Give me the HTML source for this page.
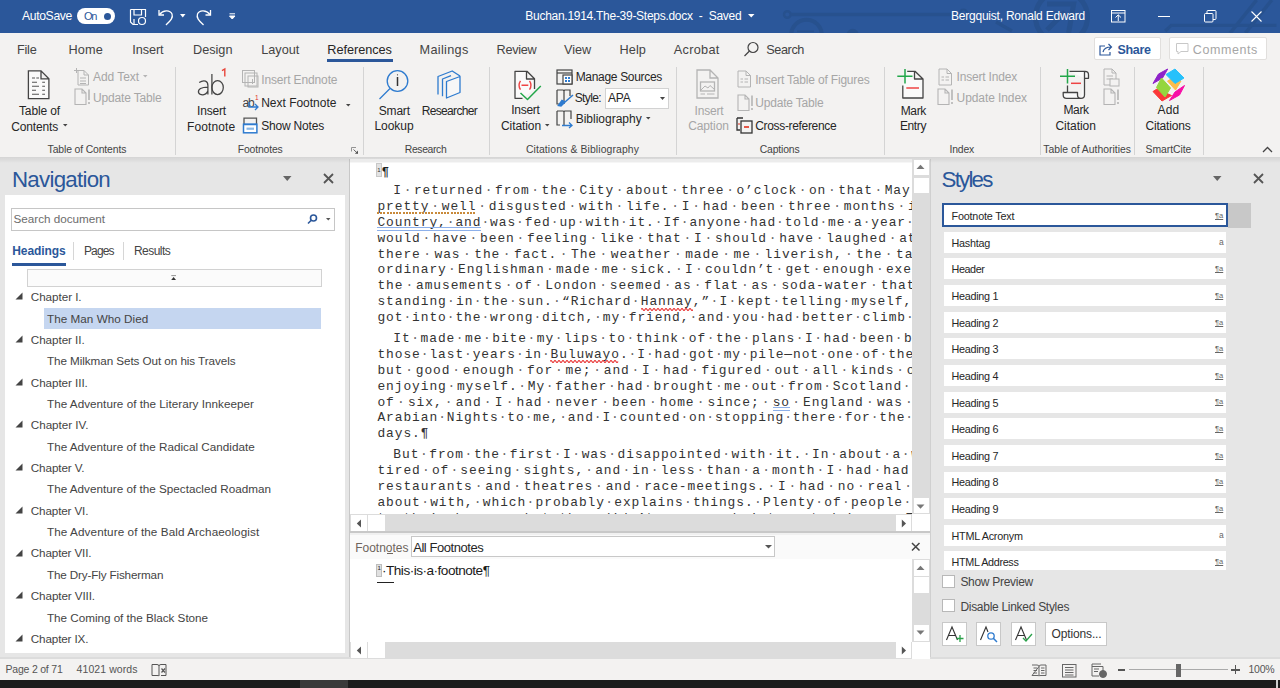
<!DOCTYPE html>
<html><head><meta charset="utf-8">
<style>
*{margin:0;padding:0;box-sizing:border-box}
html,body{width:1280px;height:688px;overflow:hidden;background:#f3f2f1;font-family:"Liberation Sans",sans-serif;color:#262626;position:relative}
.a{position:absolute}
.t{position:absolute;line-height:0;white-space:pre}
svg.a{overflow:visible}
.dl{position:absolute;line-height:0;white-space:pre;font-family:"Liberation Mono",monospace;font-size:12.9px;letter-spacing:0.93px;color:#333}
.sp{display:inline-block;text-align:center;color:#666}
</style></head><body>
<div class="a" style="left:0px;top:0px;width:1280px;height:33px;background:#2b579a;"></div>
<div class="a" style="left:760px;top:0;width:520px;height:33px;overflow:hidden">
<svg class="a" style="left:0px;top:0px;" width="520" height="33" viewBox="0 0 520 33"><g fill="none" stroke="#27518e" stroke-width="3.3"><circle cx="27.3" cy="14.5" r="3.3" stroke-width="2.4"/><line x1="30.5" y1="14.5" x2="193" y2="14.5"/><circle cx="46.5" cy="35" r="15.3" stroke-width="4"/><path d="M37 31.3 H54" stroke-width="1.6"/><circle cx="92.7" cy="35" r="4.5" fill="#27518e"/><circle cx="203.5" cy="13" r="3.5" stroke-width="2.2"/><path d="M236 22 L252 31"/><circle cx="301.5" cy="17" r="26" stroke-width="5"/><path d="M287 4 H313.7 L308.6 33 M287 30 L305 12" stroke-width="5"/><path d="M405.2 31 L411.3 25.4 H516.4"/><path d="M496.6 0 L470.2 33" stroke-width="3.5"/><path d="M511.8 0 L485.4 33" stroke-width="3.5"/></g></svg>
</div>
<div class="t" style="left:22.00px;top:16.37px;font-size:12.2px;color:#fff;letter-spacing:-0.363px">AutoSave</div>
<div class="a" style="left:77px;top:8px;width:38px;height:16px;border-radius:8px;background:#fff"></div>
<div class="t" style="left:84.00px;top:16.39px;font-size:11px;color:#2b579a;letter-spacing:-1.337px">On</div>
<div class="a" style="left:104px;top:12.5px;width:7px;height:7px;border-radius:50%;background:#2b579a"></div>
<svg class="a" style="left:129px;top:8px;" width="18" height="18" viewBox="0 0 18 18"><g fill="none" stroke="#fff" stroke-width="1.2"><path d="M1.5 1.5 H16.5 V9 M1.5 1.5 V14 L4 16.5 H9"/><path d="M5 1.5 V7 H12.5 V1.5"/><path d="M5 16.5 V11"/><circle cx="13" cy="13" r="3.5"/></g></svg>
<svg class="a" style="left:157px;top:8px;" width="20" height="18" viewBox="0 0 20 18"><g fill="none" stroke="#fff" stroke-width="1.3"><path d="M2 2 V7 H7"/><path d="M2.5 6.5 C6 2 13 1.5 15 6 C16.5 10 13 13 9 17"/></g></svg>
<svg class="a" style="left:180px;top:14px;" width="6" height="4" viewBox="0 0 6 4"><path d="M0 0 H5.5 L2.75 3.5Z" fill="#fff"/></svg>
<svg class="a" style="left:195px;top:8px;" width="18" height="18" viewBox="0 0 18 18"><g fill="none" stroke="#fff" stroke-width="1.3"><path d="M15.5 2 V7 H10.5"/><path d="M15 6.5 C11.5 2 4.5 1.5 2.5 6 C1 10 4.5 13 8.5 17"/></g></svg>
<svg class="a" style="left:229px;top:13px;" width="7" height="7" viewBox="0 0 7 7"><path d="M0.5 0.8 H6 M0.5 3 H6 L3.25 6Z" stroke="#fff" stroke-width="1" fill="#fff"/></svg>
<div class="t" style="left:525.30px;top:15.84px;font-size:12px;color:#fff;letter-spacing:-0.277px">Buchan.1914.The-39-Steps.docx  -  Saved</div>
<svg class="a" style="left:748px;top:14px;" width="7" height="4" viewBox="0 0 7 4"><path d="M0 0 H6.5 L3.25 3.5Z" fill="#fff"/></svg>
<div class="t" style="left:951.00px;top:15.84px;font-size:12px;color:#fff;letter-spacing:-0.226px">Bergquist, Ronald Edward</div>
<svg class="a" style="left:1111px;top:10px;" width="15" height="13" viewBox="0 0 15 13"><g fill="none" stroke="#fff" stroke-width="1"><rect x="0.5" y="0.5" width="13.5" height="11.5"/><path d="M0.5 3 H14 M7.25 11 V5 M4.5 7.5 L7.25 4.8 L10 7.5"/></g></svg>
<div class="a" style="left:1158px;top:16px;width:12px;height:1px;background:#fff;"></div>
<svg class="a" style="left:1204px;top:10px;" width="13" height="13" viewBox="0 0 13 13"><g fill="none" stroke="#fff" stroke-width="1"><rect x="0.5" y="3.5" width="8.5" height="8.5" rx="1"/><path d="M3 3.5 V1.5 Q3 0.5 4 0.5 H11 Q12 0.5 12 1.5 V8.5 Q12 9.5 11 9.5 H9"/></g></svg>
<svg class="a" style="left:1251px;top:11px;" width="11" height="11" viewBox="0 0 11 11"><path d="M0.5 0.5 L10.5 10.5 M10.5 0.5 L0.5 10.5" stroke="#fff" stroke-width="1.1"/></svg>
<div class="t" style="left:17.00px;top:49.60px;font-size:12.7px;color:#444444;letter-spacing:-0.241px">File</div>
<div class="t" style="left:68.40px;top:49.60px;font-size:12.7px;color:#444444;letter-spacing:0.181px">Home</div>
<div class="t" style="left:132.30px;top:49.60px;font-size:12.7px;color:#444444;letter-spacing:-0.094px">Insert</div>
<div class="t" style="left:193.00px;top:49.60px;font-size:12.7px;color:#444444;letter-spacing:-0.005px">Design</div>
<div class="t" style="left:261.20px;top:49.60px;font-size:12.7px;color:#444444;letter-spacing:-0.005px">Layout</div>
<div class="t" style="left:327.30px;top:49.60px;font-size:12.7px;color:#262626;letter-spacing:-0.025px">References</div>
<div class="t" style="left:419.50px;top:49.60px;font-size:12.7px;color:#444444;letter-spacing:0.327px">Mailings</div>
<div class="t" style="left:496.60px;top:49.60px;font-size:12.7px;color:#444444;letter-spacing:-0.324px">Review</div>
<div class="t" style="left:564.00px;top:49.60px;font-size:12.7px;color:#444444;letter-spacing:0.001px">View</div>
<div class="t" style="left:619.60px;top:49.60px;font-size:12.7px;color:#444444;letter-spacing:0.070px">Help</div>
<div class="t" style="left:673.75px;top:49.60px;font-size:12.7px;color:#444444;letter-spacing:0.319px">Acrobat</div>
<div class="t" style="left:766.30px;top:49.60px;font-size:12.7px;color:#444444;letter-spacing:-0.423px">Search</div>
<div class="a" style="left:327px;top:59px;width:66px;height:3px;background:#2b579a;"></div>
<svg class="a" style="left:743px;top:41px;" width="17" height="17" viewBox="0 0 17 17"><g fill="none" stroke="#444" stroke-width="1.2"><circle cx="10" cy="6.5" r="5"/><path d="M6.5 10 L1.5 15"/></g></svg>
<div class="a" style="left:1094px;top:37px;width:67px;height:23px;background:#fff;border:1px solid #e1dfdd;border-radius:2px"></div>
<svg class="a" style="left:1099px;top:42px;" width="15" height="14" viewBox="0 0 15 14"><g fill="none" stroke="#2b579a" stroke-width="1.2"><path d="M6 4 H1 V13 H11 V10"/><path d="M4 10 C5 6 8 5 12 5 M9.5 2 L12.5 5 L9.5 8"/></g></svg>
<div class="t" style="left:1117.40px;top:49.57px;font-size:12.5px;color:#2b579a;letter-spacing:-0.308px;font-weight:bold">Share</div>
<div class="a" style="left:1169px;top:37px;width:98px;height:23px;background:#fff;border:1px solid #e1dfdd;border-radius:2px"></div>
<svg class="a" style="left:1176px;top:43px;" width="13" height="12" viewBox="0 0 13 12"><path d="M0.5 0.5 H12 V8.5 H5 L2 11 V8.5 H0.5Z" fill="none" stroke="#c8c8c8" stroke-width="1"/></svg>
<div class="t" style="left:1192.80px;top:49.57px;font-size:12.5px;color:#a6a6a6;letter-spacing:0.571px">Comments</div>
<div class="a" style="left:0px;top:66px;width:1280px;height:91px;background:#f3f2f1;"></div>
<div class="a" style="left:0px;top:157px;width:1280px;height:1px;background:#d6d6d6;"></div>
<div class="a" style="left:0px;top:158px;width:1280px;height:1px;background:#e8e8e8;"></div>
<div class="a" style="left:175px;top:67px;width:1px;height:88px;background:#d4d4d4;"></div>
<div class="a" style="left:363px;top:67px;width:1px;height:88px;background:#d4d4d4;"></div>
<div class="a" style="left:489px;top:67px;width:1px;height:88px;background:#d4d4d4;"></div>
<div class="a" style="left:676px;top:67px;width:1px;height:88px;background:#d4d4d4;"></div>
<div class="a" style="left:883.5px;top:67px;width:1px;height:88px;background:#d4d4d4;"></div>
<div class="a" style="left:1040px;top:67px;width:1px;height:88px;background:#d4d4d4;"></div>
<div class="a" style="left:1134px;top:67px;width:1px;height:88px;background:#d4d4d4;"></div>
<div class="a" style="left:1203px;top:67px;width:1px;height:88px;background:#d4d4d4;"></div>
<div class="t" style="left:47.60px;top:149.70px;font-size:10.4px;color:#444444;letter-spacing:-0.132px">Table of Contents</div>
<div class="t" style="left:237.80px;top:149.70px;font-size:10.4px;color:#444444;letter-spacing:-0.150px">Footnotes</div>
<div class="t" style="left:404.80px;top:149.70px;font-size:10.4px;color:#444444;letter-spacing:-0.364px">Research</div>
<div class="t" style="left:525.90px;top:149.70px;font-size:10.4px;color:#444444;letter-spacing:0.120px">Citations &amp; Bibliography</div>
<div class="t" style="left:759.70px;top:149.70px;font-size:10.4px;color:#444444;letter-spacing:-0.156px">Captions</div>
<div class="t" style="left:949.50px;top:149.70px;font-size:10.4px;color:#444444;letter-spacing:-0.188px">Index</div>
<div class="t" style="left:1043.20px;top:149.70px;font-size:10.4px;color:#444444;letter-spacing:-0.004px">Table of Authorities</div>
<div class="t" style="left:1145.50px;top:149.70px;font-size:10.4px;color:#444444;letter-spacing:-0.037px">SmartCite</div>
<svg class="a" style="left:351px;top:147px;" width="8" height="7" viewBox="0 0 8 7"><path d="M0.5 0.5 H5 M0.5 0.5 V4.5" fill="none" stroke="#888" stroke-width="0.9"/><path d="M2.5 2.5 L6.5 6.3" stroke="#555" stroke-width="0.9"/><path d="M7 3.5 V6.8 H3.8Z" fill="#555"/></svg>
<svg class="a" style="left:1262px;top:146px;" width="11" height="7" viewBox="0 0 11 7"><path d="M1 6 L5.5 1.5 L10 6" fill="none" stroke="#444" stroke-width="1.3"/></svg>
<svg class="a" style="left:27px;top:70px;" width="24" height="30" viewBox="0 0 24 30"><g fill="none" stroke="#444" stroke-width="1.3"><path d="M1.4 0.9 H14 L21.9 8.8 V28.6 H1.4Z M14 0.9 V8.8 H21.9" fill="#fafafa"/><path d="M5 8 H8 M9.3 8 H12 M5 12.2 H10 M15.2 12.2 H18 M5 16.2 H12 M15.2 16.2 H18 M5 20.2 H9 M15.2 20.2 H18 M5 24.3 H12 M15.2 24.3 H18" stroke="#555" stroke-width="1.1"/></g></svg>
<div class="t" style="left:19.00px;top:110.54px;font-size:12px;color:#262626;letter-spacing:-0.129px">Table of</div>
<div class="t" style="left:11.30px;top:126.54px;font-size:12px;color:#262626;letter-spacing:-0.166px">Contents</div>
<svg class="a" style="left:63px;top:124px;" width="5" height="3" viewBox="0 0 5 3"><path d="M0 0 H4.5 L2.25 2.5Z" fill="#444"/></svg>
<svg class="a" style="left:74px;top:68px;" width="17" height="18" viewBox="0 0 17 18"><g fill="none" stroke="#b4b4b4" stroke-width="1"><path d="M4 2.5 H10 L14.5 7 V17 H4Z M10 2.5 V7 H14.5 M6 10 H12 M6 13 H12 M6 15.5 H12"/><path d="M2.5 0 V5 M0 2.5 H5"/></g></svg>
<div class="t" style="left:93.00px;top:76.84px;font-size:12px;color:#a6a6a6;letter-spacing:-0.060px">Add Text</div>
<svg class="a" style="left:143px;top:75px;" width="5" height="3" viewBox="0 0 5 3"><path d="M0 0 H4.5 L2.25 2.5Z" fill="#b4b4b4"/></svg>
<svg class="a" style="left:74px;top:88px;" width="17" height="18" viewBox="0 0 17 18"><g fill="none" stroke="#b4b4b4" stroke-width="1.1"><path d="M1 1 H8 L12 5 V16.5 H1Z M8 1 V5 H12"/><path d="M15 1.5 V12 M15 14 V16" stroke-width="1.6"/></g></svg>
<div class="t" style="left:93.00px;top:97.64px;font-size:12px;color:#a6a6a6;letter-spacing:-0.158px">Update Table</div>
<svg class="a" style="left:195px;top:66px;" width="34" height="32" viewBox="0 0 34 32"><g fill="none" stroke="#444" stroke-width="1.25"><path d="M16.9 7.9 V28.6"/><ellipse cx="22.6" cy="21.6" rx="5.7" ry="6.9"/><path d="M4.2 16.6 Q7.5 14.4 10.5 15.2 Q12.9 16.2 12.9 19.5 V28.6 M12.9 21.2 Q8 21.3 5.5 22.5 Q3 24 3.5 26.5 Q4.5 29 8 28.9 Q11.5 28.5 12.9 24.8"/></g><path d="M27 4.6 L29.8 2.9 V10.6" fill="none" stroke="#e8453a" stroke-width="1.4"/></svg>
<div class="t" style="left:197.00px;top:110.54px;font-size:12px;color:#262626;letter-spacing:-0.169px">Insert</div>
<div class="t" style="left:187.00px;top:126.54px;font-size:12px;color:#262626;letter-spacing:0.117px">Footnote</div>
<svg class="a" style="left:242px;top:70px;" width="18" height="18" viewBox="0 0 18 18"><g fill="none" stroke="#b4b4b4" stroke-width="1"><rect x="0.5" y="0.5" width="12" height="12"/><rect x="3" y="3" width="12" height="13"/><rect x="6" y="6" width="10" height="11"/><path d="M10.5 9 V14"/></g></svg>
<div class="t" style="left:261.20px;top:79.54px;font-size:12px;color:#a6a6a6;letter-spacing:-0.132px">Insert Endnote</div>
<div class="t" style="left:242.50px;top:103.34px;font-size:12px;color:#444;letter-spacing:-1.174px">ab</div>
<div class="t" style="left:255.00px;top:97.75px;font-size:6.5px;color:#e0301e">1</div>
<svg class="a" style="left:248px;top:101px;" width="12" height="10" viewBox="0 0 12 10"><g fill="none" stroke="#2e7bcf" stroke-width="1.3"><path d="M1 1 V6 H10 M7 3 L10 6 L7 9"/></g></svg>
<div class="t" style="left:261.20px;top:102.94px;font-size:12px;color:#262626;letter-spacing:-0.013px">Next Footnote</div>
<svg class="a" style="left:346px;top:104px;" width="5" height="3" viewBox="0 0 5 3"><path d="M0 0 H4.5 L2.25 2.5Z" fill="#444"/></svg>
<svg class="a" style="left:242px;top:117px;" width="16" height="17" viewBox="0 0 16 17"><g fill="none" stroke-width="1.3"><path d="M2 7 V1.2 H14.5 V7" stroke="#555"/><rect x="1.5" y="7.2" width="13.4" height="8.6" fill="#fff" stroke="#2e7bcf" stroke-width="1.5"/><path d="M4.5 11.7 H12" stroke="#8ab8e6" stroke-width="2.2"/><path d="M1.5 7.5 H15" stroke="#2e7bcf" stroke-width="1.5"/></g></svg>
<div class="t" style="left:261.20px;top:125.84px;font-size:12px;color:#262626;letter-spacing:-0.190px">Show Notes</div>
<svg class="a" style="left:377px;top:69px;" width="36" height="32" viewBox="0 0 36 32"><g fill="none" stroke="#2e7bcf" stroke-width="1.3"><circle cx="20.5" cy="12" r="10.3"/><path d="M13 19.5 L2.5 30"/><path d="M20.5 8 V17" stroke="#333" stroke-width="1.5"/><circle cx="20.5" cy="5.8" r="0.6" fill="#333" stroke="none"/></g></svg>
<div class="t" style="left:378.80px;top:110.84px;font-size:12px;color:#262626;letter-spacing:-0.201px">Smart</div>
<div class="t" style="left:374.50px;top:126.44px;font-size:12px;color:#262626;letter-spacing:-0.062px">Lookup</div>
<svg class="a" style="left:436px;top:69px;" width="26" height="31" viewBox="0 0 26 31"><g fill="none" stroke="#2e7bcf" stroke-width="1.3" stroke-linejoin="round"><path d="M2 25.4 V7.5 L16.2 2 L24 7"/><path d="M6.5 27.3 V10 L15 6.6"/><path d="M10.5 12.5 V29 L24 23.5 V7.5Z" fill="#f7f7f7"/></g></svg>
<div class="t" style="left:421.80px;top:110.84px;font-size:12px;color:#262626;letter-spacing:-0.683px">Researcher</div>
<svg class="a" style="left:505px;top:64px;" width="40" height="40" viewBox="0 0 40 40"><g fill="none" stroke-width="1.3" stroke-linejoin="round"><path d="M17.5 34.3 H10 V7.3 H22 L29.5 14.8 V25 M21.5 7.3 V15 H29.5" stroke="#444" fill="#fafafa"/><path d="M15.5 16.8 Q12.5 21.2 15.5 25.6 M24.5 16.8 Q27.5 21.2 24.5 25.6 M16.5 21.3 H23.3" stroke="#ee4444" stroke-width="1.4"/><path d="M15.5 29 L22.5 35.5 L35.8 22" stroke="#22a74a" stroke-width="1.5"/></g></svg>
<div class="t" style="left:511.25px;top:110.24px;font-size:12px;color:#262626;letter-spacing:-0.269px">Insert</div>
<div class="t" style="left:501.00px;top:126.44px;font-size:12px;color:#262626;letter-spacing:-0.086px">Citation</div>
<svg class="a" style="left:545px;top:124px;" width="5" height="3" viewBox="0 0 5 3"><path d="M0 0 H4.5 L2.25 2.5Z" fill="#444"/></svg>
<svg class="a" style="left:556px;top:69px;" width="18" height="17" viewBox="0 0 18 17"><g fill="none" stroke="#444" stroke-width="1.2"><rect x="1" y="1" width="15" height="14"/><path d="M1 4 H16"/><rect x="7" y="6" width="9" height="9" fill="#fff"/></g><g fill="#2e7bcf"><rect x="9" y="8" width="2" height="2"/><rect x="12" y="8" width="2" height="2"/><rect x="9" y="11" width="2" height="2"/><rect x="12" y="11" width="2" height="2"/></g></svg>
<div class="t" style="left:575.70px;top:77.04px;font-size:12px;color:#262626;letter-spacing:-0.316px">Manage Sources</div>
<svg class="a" style="left:556px;top:89px;" width="18" height="18" viewBox="0 0 18 18"><g fill="none" stroke="#444" stroke-width="1.2"><path d="M1 1 H7 Q8 1 8 2 V15 M1 1 V15 H4"/><path d="M8 2 Q8 1 9 1 H14 V7"/></g><path d="M17 6 L9 13 M9 13 L5 17 L2.5 16.5 L6 11.5Z" stroke="#2e7bcf" stroke-width="1.6" fill="#2e7bcf"/></svg>
<div class="t" style="left:574.70px;top:98.44px;font-size:12px;color:#262626;letter-spacing:-0.619px">Style:</div>
<div class="a" style="left:604.6px;top:87.6px;width:64px;height:21px;background:#fff;border:1px solid #d2d2d2"></div>
<div class="t" style="left:608.00px;top:98.44px;font-size:12px;color:#262626;letter-spacing:-0.240px">APA</div>
<svg class="a" style="left:659.5px;top:97px;" width="6" height="4" viewBox="0 0 6 4"><path d="M0 0 H5 L2.5 3Z" fill="#444"/></svg>
<svg class="a" style="left:556px;top:110px;" width="18" height="18" viewBox="0 0 18 18"><g fill="none" stroke="#444" stroke-width="1.2"><path d="M1 1 H7 Q8 1 8 2 V15 M1 1 V15 H4 M8 2 Q8 1 9 1 H15 V9"/></g><path d="M6 15.5 H16 M13 12.5 L16 15.5 L13 18" fill="none" stroke="#2e7bcf" stroke-width="1.3"/></svg>
<div class="t" style="left:575.70px;top:119.24px;font-size:12px;color:#262626;letter-spacing:-0.003px">Bibliography</div>
<svg class="a" style="left:646.4px;top:117px;" width="5" height="3" viewBox="0 0 5 3"><path d="M0 0 H4.5 L2.25 2.5Z" fill="#444"/></svg>
<svg class="a" style="left:695px;top:69px;" width="25" height="31" viewBox="0 0 25 31"><g fill="none" stroke="#b4b4b4" stroke-width="1.3"><path d="M2 1 H15 L23 9 V29 H2Z M15 1 V9 H23"/><rect x="5.5" y="13" width="14" height="9"/><path d="M6 21 L10 17 L13 19 L15 16.5 L19 20" stroke-width="1"/><path d="M5.5 25 H10 M12 25 H19.5" stroke-width="1"/></g></svg>
<div class="t" style="left:694.50px;top:110.54px;font-size:12px;color:#a6a6a6;letter-spacing:-0.169px">Insert</div>
<div class="t" style="left:688.20px;top:126.44px;font-size:12px;color:#a6a6a6;letter-spacing:-0.109px">Caption</div>
<svg class="a" style="left:737px;top:70px;" width="15" height="18" viewBox="0 0 15 18"><g fill="none" stroke="#b4b4b4" stroke-width="1"><path d="M1 1 H9 L13.5 5.5 V17 H1Z M9 1 V5.5 H13.5 M3.5 9 H6 M7.5 9 H11 M3.5 12 H6 M7.5 12 H11"/></g></svg>
<div class="t" style="left:755.20px;top:79.54px;font-size:12px;color:#a6a6a6;letter-spacing:-0.183px">Insert Table of Figures</div>
<svg class="a" style="left:737px;top:94px;" width="17" height="18" viewBox="0 0 17 18"><g fill="none" stroke="#b4b4b4" stroke-width="1.1"><path d="M1 1 H8 L12 5 V16.5 H1Z M8 1 V5 H12"/><path d="M15 1.5 V12 M15 14 V16" stroke-width="1.6"/></g></svg>
<div class="t" style="left:755.20px;top:102.84px;font-size:12px;color:#a6a6a6;letter-spacing:-0.183px">Update Table</div>
<svg class="a" style="left:735px;top:117px;" width="19" height="17" viewBox="0 0 19 17"><g fill="none" stroke="#333" stroke-width="1.3"><path d="M2 1 H8 M2 1 V13 H5"/><rect x="6" y="4" width="11" height="12" fill="#f3f2f1"/></g><path d="M9 10 H14" stroke="#e0301e" stroke-width="1.6"/><path d="M3 7 H5" stroke="#e0301e" stroke-width="1"/></svg>
<div class="t" style="left:755.20px;top:125.84px;font-size:12px;color:#262626;letter-spacing:-0.329px">Cross-reference</div>
<svg class="a" style="left:890px;top:64px;" width="40" height="40" viewBox="0 0 40 40"><g fill="none" stroke-width="1.3" stroke-linejoin="round"><path d="M17.2 7.3 H25 L33 15 V34 H12.8 V21.5 M24.5 7.3 V15 H33" stroke="#444" fill="#fafafa"/><path d="M15 5 V19.5 M7.3 12.3 H22.5" stroke="#22a74a" stroke-width="1.5"/><path d="M16.3 24 H29" stroke="#ee4444" stroke-width="1.5"/></g></svg>
<div class="t" style="left:900.70px;top:110.54px;font-size:12px;color:#262626;letter-spacing:-0.342px">Mark</div>
<div class="t" style="left:900.00px;top:126.44px;font-size:12px;color:#262626;letter-spacing:-0.402px">Entry</div>
<svg class="a" style="left:938px;top:68px;" width="15" height="18" viewBox="0 0 15 18"><g fill="none" stroke="#b4b4b4" stroke-width="1"><path d="M1 1 H9 L13.5 5.5 V17 H1Z M9 1 V5.5 H13.5 M3.5 9 H6 M7.5 9 H11 M3.5 12 H6 M7.5 12 H11"/></g></svg>
<div class="t" style="left:956.60px;top:77.04px;font-size:12px;color:#a6a6a6;letter-spacing:-0.192px">Insert Index</div>
<svg class="a" style="left:937px;top:88px;" width="17" height="18" viewBox="0 0 17 18"><g fill="none" stroke="#b4b4b4" stroke-width="1.1"><path d="M1 1 H8 L12 5 V16.5 H1Z M8 1 V5 H12"/><path d="M15 1.5 V12 M15 14 V16" stroke-width="1.6"/></g></svg>
<div class="t" style="left:956.60px;top:97.54px;font-size:12px;color:#a6a6a6;letter-spacing:-0.090px">Update Index</div>
<svg class="a" style="left:1050px;top:64px;" width="45" height="40" viewBox="0 0 45 40"><g fill="none" stroke-width="1.3" stroke-linejoin="round"><path d="M19.5 7.3 H35 Q38.5 7.3 38.5 10.8 V14.3 H34.5 M34.5 7.3 V31 Q34.5 34.3 31 34.3 H16.5 Q13.2 34.3 13.2 31 V28.5 H27.5 V31 Q27.5 34.3 31 34.3 M17.5 21.5 V28.5" stroke="#444" fill="#fafafa"/><path d="M17.5 5 V19.5 M10 12.3 H25" stroke="#22a74a" stroke-width="1.5"/><path d="M21 19.3 H31" stroke="#ee4444" stroke-width="1.5"/></g></svg>
<div class="t" style="left:1063.40px;top:110.24px;font-size:12px;color:#262626;letter-spacing:-0.342px">Mark</div>
<div class="t" style="left:1055.50px;top:126.24px;font-size:12px;color:#262626;letter-spacing:-0.048px">Citation</div>
<svg class="a" style="left:1103px;top:68px;" width="18" height="20" viewBox="0 0 18 20"><g fill="none" stroke="#b4b4b4" stroke-width="1"><path d="M1 1 H9 L13 5 V17 H1Z M9 1 V5 H13 M3.5 8 H10 M3.5 11 H10"/><rect x="7" y="11" width="9" height="7" fill="#f3f2f1"/></g></svg>
<svg class="a" style="left:1103px;top:88px;" width="18" height="18" viewBox="0 0 18 18"><g fill="none" stroke="#b4b4b4" stroke-width="1.1"><path d="M1 1 H8 L12 5 V16.5 H1Z M8 1 V5 H12"/><path d="M15 1.5 V12 M15 14 V16" stroke-width="1.6"/></g></svg>
<svg class="a" style="left:1140px;top:64px;" width="50" height="40" viewBox="0 0 50 40"><g stroke-linejoin="round" stroke-width="1"><path d="M13 19.5 L18.5 10 L27.7 5 L22.5 14Z" fill="#8e22c9" stroke="#8e22c9"/><path d="M27.5 17 L33 14 L41 17 L35.5 26Z" fill="#fdbd4c" stroke="#fdbd4c"/><path d="M26 10.5 L35 5 L44 14 L35 19.5Z" fill="#27c1fb" stroke="#27c1fb"/><path d="M13 27.5 L17 25 L31.5 31.5 L22 37Z" fill="#fb3838" stroke="#fb3838"/><path d="M16.5 23.5 L21.5 14 L30.5 24 L25 33Z" fill="#95d63e" stroke="#95d63e"/><path d="M29.5 36.5 L35 28 L44.5 21.5 L39.5 31Z" fill="#f70fa6" stroke="#f70fa6"/></g></svg>
<div class="t" style="left:1157.60px;top:110.24px;font-size:12px;color:#262626;letter-spacing:0.116px">Add</div>
<div class="t" style="left:1145.50px;top:126.24px;font-size:12px;color:#262626;letter-spacing:-0.188px">Citations</div>
<div class="a" style="left:0px;top:159px;width:345px;height:500px;background:#e6e6e6;"></div>
<div class="a" style="left:345px;top:159px;width:4px;height:500px;background:#e6e6e6;"></div>
<div class="a" style="left:349px;top:159px;width:1px;height:500px;background:#c8c8c8;"></div>
<div class="t" style="left:12.00px;top:179.77px;font-size:22.3px;color:#2b579a;letter-spacing:-0.737px">Navigation</div>
<svg class="a" style="left:283px;top:176px;" width="9" height="6" viewBox="0 0 9 6"><path d="M0 0 H8.5 L4.25 5Z" fill="#666"/></svg>
<svg class="a" style="left:323px;top:173px;" width="11" height="11" viewBox="0 0 11 11"><path d="M1 1 L10 10 M10 1 L1 10" stroke="#555" stroke-width="1.8"/></svg>
<div class="a" style="left:5px;top:195px;width:340px;height:458px;background:#fff;"></div>
<div class="a" style="left:11px;top:207.5px;width:324px;height:23px;background:#fff;border:1px solid #c6c6c6"></div>
<div class="t" style="left:13.50px;top:219.45px;font-size:11.7px;color:#6d6d6d;letter-spacing:-0.014px">Search document</div>
<svg class="a" style="left:307px;top:214px;" width="11" height="10" viewBox="0 0 11 10"><g fill="none" stroke="#2b579a" stroke-width="1.6"><circle cx="6.5" cy="4" r="3"/><path d="M4.3 6.2 L1 9.5"/></g></svg>
<svg class="a" style="left:326px;top:218px;" width="5" height="3" viewBox="0 0 5 3"><path d="M0 0 H4.5 L2.25 2.5Z" fill="#555"/></svg>
<div class="t" style="left:12.30px;top:250.94px;font-size:12px;color:#2b579a;letter-spacing:-0.101px;font-weight:bold">Headings</div>
<div class="a" style="left:12px;top:263px;width:54px;height:3px;background:#2b579a;"></div>
<div class="a" style="left:73px;top:242px;width:1px;height:18px;background:#d6d6d6;"></div>
<div class="a" style="left:123px;top:242px;width:1px;height:18px;background:#d6d6d6;"></div>
<div class="t" style="left:84.00px;top:250.94px;font-size:12px;color:#444;letter-spacing:-0.885px">Pages</div>
<div class="t" style="left:134.00px;top:250.94px;font-size:12px;color:#444;letter-spacing:-0.545px">Results</div>
<div class="a" style="left:27px;top:269px;width:295px;height:18px;background:#fbfbfb;border:1px solid #d2d2d2"></div>
<svg class="a" style="left:171px;top:274.8px;" width="6" height="6" viewBox="0 0 6 6"><path d="M0.3 0.6 H5 " stroke="#888" stroke-width="0.9"/><path d="M0.2 5 L2.6 2 L5 5Z" fill="#333"/></svg>
<div class="a" style="left:43.5px;top:308.3px;width:277.5px;height:20.3px;background:#c5d6f0;"></div>
<svg class="a" style="left:15px;top:292.3px;" width="8" height="8" viewBox="0 0 8 8"><path d="M7.5 0.5 V7.5 H0.5Z" fill="#444"/></svg>
<div class="t" style="left:30.80px;top:297.25px;font-size:11.7px;color:#444;letter-spacing:-0.058px">Chapter I.</div>
<div class="t" style="left:47.00px;top:318.60px;font-size:11.7px;color:#444;letter-spacing:0.032px">The Man Who Died</div>
<svg class="a" style="left:15px;top:335.00000000000006px;" width="8" height="8" viewBox="0 0 8 8"><path d="M7.5 0.5 V7.5 H0.5Z" fill="#444"/></svg>
<div class="t" style="left:30.80px;top:339.95px;font-size:11.7px;color:#444;letter-spacing:-0.066px">Chapter II.</div>
<div class="t" style="left:47.00px;top:361.30px;font-size:11.7px;color:#444;letter-spacing:-0.071px">The Milkman Sets Out on his Travels</div>
<svg class="a" style="left:15px;top:377.7000000000001px;" width="8" height="8" viewBox="0 0 8 8"><path d="M7.5 0.5 V7.5 H0.5Z" fill="#444"/></svg>
<div class="t" style="left:30.80px;top:382.65px;font-size:11.7px;color:#444;letter-spacing:-0.073px">Chapter III.</div>
<div class="t" style="left:47.00px;top:404.00px;font-size:11.7px;color:#444;letter-spacing:0.026px">The Adventure of the Literary Innkeeper</div>
<svg class="a" style="left:15px;top:420.40000000000015px;" width="8" height="8" viewBox="0 0 8 8"><path d="M7.5 0.5 V7.5 H0.5Z" fill="#444"/></svg>
<div class="t" style="left:30.80px;top:425.35px;font-size:11.7px;color:#444;letter-spacing:-0.046px">Chapter IV.</div>
<div class="t" style="left:47.00px;top:446.70px;font-size:11.7px;color:#444;letter-spacing:0.011px">The Adventure of the Radical Candidate</div>
<svg class="a" style="left:15px;top:463.1000000000002px;" width="8" height="8" viewBox="0 0 8 8"><path d="M7.5 0.5 V7.5 H0.5Z" fill="#444"/></svg>
<div class="t" style="left:30.80px;top:468.05px;font-size:11.7px;color:#444;letter-spacing:-0.116px">Chapter V.</div>
<div class="t" style="left:47.00px;top:489.40px;font-size:11.7px;color:#444;letter-spacing:0.012px">The Adventure of the Spectacled Roadman</div>
<svg class="a" style="left:15px;top:505.8000000000002px;" width="8" height="8" viewBox="0 0 8 8"><path d="M7.5 0.5 V7.5 H0.5Z" fill="#444"/></svg>
<div class="t" style="left:30.80px;top:510.75px;font-size:11.7px;color:#444;letter-spacing:-0.144px">Chapter VI.</div>
<div class="t" style="left:47.00px;top:532.10px;font-size:11.7px;color:#444;letter-spacing:0.095px">The Adventure of the Bald Archaeologist</div>
<svg class="a" style="left:15px;top:548.5000000000002px;" width="8" height="8" viewBox="0 0 8 8"><path d="M7.5 0.5 V7.5 H0.5Z" fill="#444"/></svg>
<div class="t" style="left:30.80px;top:553.45px;font-size:11.7px;color:#444;letter-spacing:-0.144px">Chapter VII.</div>
<div class="t" style="left:47.00px;top:574.80px;font-size:11.7px;color:#444;letter-spacing:-0.153px">The Dry-Fly Fisherman</div>
<svg class="a" style="left:15px;top:591.2000000000003px;" width="8" height="8" viewBox="0 0 8 8"><path d="M7.5 0.5 V7.5 H0.5Z" fill="#444"/></svg>
<div class="t" style="left:30.80px;top:596.15px;font-size:11.7px;color:#444;letter-spacing:-0.114px">Chapter VIII.</div>
<div class="t" style="left:47.00px;top:617.50px;font-size:11.7px;color:#444;letter-spacing:-0.025px">The Coming of the Black Stone</div>
<svg class="a" style="left:15px;top:633.9000000000003px;" width="8" height="8" viewBox="0 0 8 8"><path d="M7.5 0.5 V7.5 H0.5Z" fill="#444"/></svg>
<div class="t" style="left:30.80px;top:638.85px;font-size:11.7px;color:#444;letter-spacing:-0.144px">Chapter IX.</div>
<div class="a" style="left:930px;top:159px;width:1px;height:500px;background:#d0d0d0;"></div>
<div class="a" style="left:931px;top:159px;width:349px;height:500px;background:#e6e6e6;"></div>
<div class="t" style="left:941.60px;top:179.77px;font-size:22.3px;color:#2b579a;letter-spacing:-1.788px">Styles</div>
<svg class="a" style="left:1213px;top:176px;" width="9" height="6" viewBox="0 0 9 6"><path d="M0 0 H8.5 L4.25 5Z" fill="#666"/></svg>
<svg class="a" style="left:1253px;top:173px;" width="11" height="11" viewBox="0 0 11 11"><path d="M1 1 L10 10 M10 1 L1 10" stroke="#555" stroke-width="1.8"/></svg>
<div class="a" style="left:1228px;top:203px;width:22.5px;height:24.5px;background:#c8c8c8;"></div>
<div class="a" style="left:942.3px;top:203.1px;width:285.4px;height:24.3px;background:#fff;border:2px solid #2b579a"></div>
<div class="t" style="left:951.50px;top:215.96px;font-size:10.8px;color:#262626;letter-spacing:-0.188px">Footnote Text</div>
<div class="t" style="left:1215.00px;top:215.90px;font-size:7.5px;color:#666;text-decoration:underline">¶a</div>
<div class="a" style="left:931px;top:229px;width:349px;height:341px;overflow:hidden">
<div class="a" style="left:13px;top:2.6500000000000057px;width:281.7px;height:21.2px;background:#fff;"></div>
<div class="a" style="left:13px;top:29.30000000000001px;width:281.7px;height:21.2px;background:#fff;"></div>
<div class="a" style="left:13px;top:55.94999999999999px;width:281.7px;height:21.2px;background:#fff;"></div>
<div class="a" style="left:13px;top:82.60000000000002px;width:281.7px;height:21.2px;background:#fff;"></div>
<div class="a" style="left:13px;top:109.25px;width:281.7px;height:21.2px;background:#fff;"></div>
<div class="a" style="left:13px;top:135.89999999999998px;width:281.7px;height:21.2px;background:#fff;"></div>
<div class="a" style="left:13px;top:162.54999999999995px;width:281.7px;height:21.2px;background:#fff;"></div>
<div class="a" style="left:13px;top:189.2px;width:281.7px;height:21.2px;background:#fff;"></div>
<div class="a" style="left:13px;top:215.85000000000002px;width:281.7px;height:21.2px;background:#fff;"></div>
<div class="a" style="left:13px;top:242.5px;width:281.7px;height:21.2px;background:#fff;"></div>
<div class="a" style="left:13px;top:269.15px;width:281.7px;height:21.2px;background:#fff;"></div>
<div class="a" style="left:13px;top:295.79999999999995px;width:281.7px;height:21.2px;background:#fff;"></div>
<div class="a" style="left:13px;top:322.45000000000005px;width:281.7px;height:21.2px;background:#fff;"></div>
<div class="t" style="left:20.50px;top:13.61px;font-size:10.8px;color:#262626;letter-spacing:-0.247px">Hashtag</div>
<div class="t" style="left:288.00px;top:12.90px;font-size:8.5px;color:#666">a</div>
<div class="t" style="left:20.50px;top:40.26px;font-size:10.8px;color:#262626;letter-spacing:-0.404px">Header</div>
<div class="t" style="left:284.00px;top:40.20px;font-size:7.5px;color:#666;text-decoration:underline">¶a</div>
<div class="t" style="left:20.50px;top:66.91px;font-size:10.8px;color:#262626;letter-spacing:-0.293px">Heading 1</div>
<div class="t" style="left:284.00px;top:66.85px;font-size:7.5px;color:#666;text-decoration:underline">¶a</div>
<div class="t" style="left:20.50px;top:93.56px;font-size:10.8px;color:#262626;letter-spacing:-0.293px">Heading 2</div>
<div class="t" style="left:284.00px;top:93.50px;font-size:7.5px;color:#666;text-decoration:underline">¶a</div>
<div class="t" style="left:20.50px;top:120.21px;font-size:10.8px;color:#262626;letter-spacing:-0.293px">Heading 3</div>
<div class="t" style="left:284.00px;top:120.15px;font-size:7.5px;color:#666;text-decoration:underline">¶a</div>
<div class="t" style="left:20.50px;top:146.86px;font-size:10.8px;color:#262626;letter-spacing:-0.293px">Heading 4</div>
<div class="t" style="left:284.00px;top:146.80px;font-size:7.5px;color:#666;text-decoration:underline">¶a</div>
<div class="t" style="left:20.50px;top:173.51px;font-size:10.8px;color:#262626;letter-spacing:-0.293px">Heading 5</div>
<div class="t" style="left:284.00px;top:173.45px;font-size:7.5px;color:#666;text-decoration:underline">¶a</div>
<div class="t" style="left:20.50px;top:200.16px;font-size:10.8px;color:#262626;letter-spacing:-0.293px">Heading 6</div>
<div class="t" style="left:284.00px;top:200.10px;font-size:7.5px;color:#666;text-decoration:underline">¶a</div>
<div class="t" style="left:20.50px;top:226.81px;font-size:10.8px;color:#262626;letter-spacing:-0.293px">Heading 7</div>
<div class="t" style="left:284.00px;top:226.75px;font-size:7.5px;color:#666;text-decoration:underline">¶a</div>
<div class="t" style="left:20.50px;top:253.46px;font-size:10.8px;color:#262626;letter-spacing:-0.293px">Heading 8</div>
<div class="t" style="left:284.00px;top:253.40px;font-size:7.5px;color:#666;text-decoration:underline">¶a</div>
<div class="t" style="left:20.50px;top:280.11px;font-size:10.8px;color:#262626;letter-spacing:-0.293px">Heading 9</div>
<div class="t" style="left:284.00px;top:280.05px;font-size:7.5px;color:#666;text-decoration:underline">¶a</div>
<div class="t" style="left:20.50px;top:306.76px;font-size:10.8px;color:#262626;letter-spacing:-0.234px">HTML Acronym</div>
<div class="t" style="left:288.00px;top:306.05px;font-size:8.5px;color:#666">a</div>
<div class="t" style="left:20.50px;top:333.41px;font-size:10.8px;color:#262626;letter-spacing:-0.335px">HTML Address</div>
<div class="t" style="left:284.00px;top:333.35px;font-size:7.5px;color:#666;text-decoration:underline">¶a</div>
</div>
<div class="a" style="left:941.7px;top:575px;width:13px;height:13px;background:#fff;border:1px solid #b8b8b8"></div>
<div class="t" style="left:960.40px;top:582.34px;font-size:12px;color:#444;letter-spacing:-0.294px">Show Preview</div>
<div class="a" style="left:941.7px;top:599px;width:13px;height:13px;background:#fff;border:1px solid #b8b8b8"></div>
<div class="t" style="left:960.40px;top:606.64px;font-size:12px;color:#444;letter-spacing:-0.287px">Disable Linked Styles</div>
<div class="a" style="left:941.7px;top:621.6px;width:25px;height:24.2px;background:#fff;border:1px solid #c8c8c8"></div>
<div class="a" style="left:976px;top:621.6px;width:25px;height:24.2px;background:#fff;border:1px solid #c8c8c8"></div>
<div class="a" style="left:1010.6px;top:621.6px;width:25px;height:24.2px;background:#fff;border:1px solid #c8c8c8"></div>
<svg class="a" style="left:945px;top:625px;" width="20" height="18" viewBox="0 0 20 18"><path d="M1.5 15 L7 2 L12.5 15 M3.5 10.5 H10.5" fill="none" stroke="#333" stroke-width="1.1"/><path d="M15 10 V17 M11.5 13.5 H18.5" stroke="#2aa14a" stroke-width="1.3"/></svg>
<svg class="a" style="left:979px;top:625px;" width="20" height="18" viewBox="0 0 20 18"><path d="M1.5 15 L7 2 L9 7" fill="none" stroke="#333" stroke-width="1.1"/><circle cx="12" cy="11" r="3.2" fill="none" stroke="#2e7bcf" stroke-width="1.3"/><path d="M14.3 13.3 L18 17" stroke="#2e7bcf" stroke-width="1.5"/></svg>
<svg class="a" style="left:1014px;top:625px;" width="20" height="18" viewBox="0 0 20 18"><path d="M1.5 15 L7 2 L12.5 15 M3.5 10.5 H10.5" fill="none" stroke="#333" stroke-width="1.1"/><path d="M9 13 L12 16 L18 9" fill="none" stroke="#2aa14a" stroke-width="1.3"/></svg>
<div class="a" style="left:1045.2px;top:621.6px;width:62.3px;height:24.2px;background:#fff;border:1px solid #c8c8c8"></div>
<div class="t" style="left:1051.50px;top:633.94px;font-size:12px;color:#333;letter-spacing:-0.136px">Options...</div>
<div class="a" style="left:0px;top:657px;width:1280px;height:2px;background:#dcdcdc;"></div>
<div class="a" style="left:0px;top:659px;width:1280px;height:21px;background:#f3f2f1;"></div>
<div class="t" style="left:5.50px;top:669.36px;font-size:10.5px;color:#555;letter-spacing:-0.212px">Page 2 of 71</div>
<div class="t" style="left:76.60px;top:669.36px;font-size:10.5px;color:#555;letter-spacing:0.080px">41021 words</div>
<svg class="a" style="left:151px;top:663px;" width="17" height="14" viewBox="0 0 17 14"><g fill="none" stroke="#555" stroke-width="1"><path d="M1 1.5 H6 Q8 1.5 8 3 V13 M8 3 Q8 1.5 10 1.5 H15 V12.5 H10 M1 1.5 V12.5 H6 Q8 12.5 8 13"/><path d="M10.5 5.5 L14 9.5 M14 5.5 L10.5 9.5" stroke-width="1.2"/></g></svg>
<svg class="a" style="left:1031px;top:664px;" width="16" height="13" viewBox="0 0 16 13"><g fill="none" stroke="#666" stroke-width="1"><path d="M1 1 H6 Q8 1 8 2.5 V12 M8 2.5 Q8 1 10 1 H15 V11.5 H10 Q8 11.5 8 12 Q8 11.5 6 11.5 H1Z M2.5 4 H6 M2.5 6.5 H6 M2.5 9 H6 M10 4 H13.5 M10 6.5 H13.5 M10 9 H13.5"/></g></svg>
<svg class="a" style="left:1062px;top:664px;" width="15" height="14" viewBox="0 0 15 14"><g fill="none" stroke="#666" stroke-width="1"><rect x="0.5" y="0.5" width="13.5" height="12.5"/><path d="M3 3.5 H11.5 M3 6 H11.5 M3 8.5 H11.5 M3 11 H11.5"/></g></svg>
<svg class="a" style="left:1091px;top:663px;" width="17" height="15" viewBox="0 0 17 15"><g fill="none" stroke="#666" stroke-width="1"><path d="M10 1 H1 V13 H8 M1 3.5 H12 V8 M3 6 H8 M3 8.5 H7"/><circle cx="12" cy="11" r="3.5" fill="#666"/></g></svg>
<div class="a" style="left:1117.6px;top:669px;width:7px;height:1.5px;background:#555;"></div>
<div class="a" style="left:1129.3px;top:669px;width:98.5px;height:1px;background:#aaa;"></div>
<div class="a" style="left:1175.5px;top:663.5px;width:5.5px;height:13px;background:#666;"></div>
<div class="a" style="left:1231px;top:669px;width:8.5px;height:1.5px;background:#555;"></div>
<div class="a" style="left:1234.5px;top:665.3px;width:1.5px;height:9px;background:#555;"></div>
<div class="t" style="left:1248.40px;top:669.36px;font-size:10.5px;color:#555;letter-spacing:-0.214px">100%</div>
<div class="a" style="left:0;top:158px;width:1280px;height:5px;background:linear-gradient(rgba(0,0,0,0.07),rgba(0,0,0,0))"></div>
<div class="a" style="left:0px;top:680px;width:1280px;height:8px;background:#1c1c1c;"></div>
<div class="a" style="left:300px;top:680px;width:48px;height:8px;background:#3a3a3a;"></div>
<div class="a" style="left:1276px;top:680px;width:1.5px;height:8px;background:#cfcfcf;"></div>
<div class="a" style="left:350px;top:159px;width:562px;height:355px;background:#fff;"></div>
<div class="a" style="left:350px;top:159px;width:562px;height:3px;background:#ececec;"></div>
<div class="a" style="left:350px;top:162px;width:562px;height:1px;background:#f6f6f6;"></div>
<div class="a" style="left:912px;top:159px;width:18px;height:355px;background:#dcdcdc;"></div>
<div class="a" style="left:913.5px;top:159.7px;width:15px;height:15px;background:#fff;"></div>
<svg class="a" style="left:916px;top:164px;" width="9" height="6" viewBox="0 0 9 6"><path d="M0.5 5 L4.5 0.8 L8.5 5Z" fill="#777"/></svg>
<div class="a" style="left:913.5px;top:177.7px;width:15px;height:15.7px;background:#fff;"></div>
<div class="a" style="left:913.5px;top:498.2px;width:15px;height:15.2px;background:#fff;"></div>
<svg class="a" style="left:916px;top:503.5px;" width="9" height="6" viewBox="0 0 9 6"><path d="M0.5 0.5 H8.5 L4.5 4.7Z" fill="#777"/></svg>
<div class="a" style="left:350px;top:514px;width:562px;height:17px;background:#dcdcdc;"></div>
<div class="a" style="left:351px;top:514.5px;width:16px;height:16px;background:#fff;"></div>
<svg class="a" style="left:356px;top:518.5px;" width="6" height="9" viewBox="0 0 6 9"><path d="M5 0.5 V8.5 L0.8 4.5Z" fill="#555"/></svg>
<div class="a" style="left:367.5px;top:514.5px;width:17px;height:16px;background:#fff;"></div>
<div class="a" style="left:895.6px;top:514.5px;width:15.6px;height:16px;background:#fff;"></div>
<svg class="a" style="left:901px;top:518.5px;" width="6" height="9" viewBox="0 0 6 9"><path d="M0.8 0.5 V8.5 L5 4.5Z" fill="#555"/></svg>
<div class="a" style="left:912px;top:514px;width:18px;height:17px;background:#fff;"></div>
<div class="a" style="left:350px;top:531px;width:580px;height:2px;background:#c8c8c8;"></div>
<div class="a" style="left:350px;top:533px;width:580px;height:2px;background:#f0f0f0;"></div>
<div class="a" style="left:0;top:159px;width:912px;height:355px;overflow:hidden">
<div class="a" style="left:376px;top:3.9000000000000057px;width:6px;height:13.7px;background:#e2e2e2;border:1px solid #c8c8c8"></div>
<div class="t" style="left:377.20px;top:11.42px;font-size:6px;color:#333">1</div>
<div class="t" style="left:382.00px;top:12.84px;font-size:12px;color:#222;font-weight:bold">¶</div>
<div class="dl" style="left:393.36px;top:31.96px">I<span class="sp" style="width:11.869px">·</span>returned<span class="sp" style="width:11.869px">·</span>from<span class="sp" style="width:11.869px">·</span>the<span class="sp" style="width:11.869px">·</span>City<span class="sp" style="width:11.869px">·</span>about<span class="sp" style="width:11.869px">·</span>three<span class="sp" style="width:11.869px">·</span>o’clock<span class="sp" style="width:11.869px">·</span>on<span class="sp" style="width:11.869px">·</span>that<span class="sp" style="width:11.869px">·</span>May<span class="sp" style="width:11.869px">·</span>afternoon</div>
<div class="dl" style="left:377.46px;top:47.86px">pretty<span class="sp" style="width:12.331px">·</span>well<span class="sp" style="width:12.331px">·</span>disgusted<span class="sp" style="width:12.331px">·</span>with<span class="sp" style="width:12.331px">·</span>life.<span class="sp" style="width:12.331px">·</span>I<span class="sp" style="width:12.331px">·</span>had<span class="sp" style="width:12.331px">·</span>been<span class="sp" style="width:12.331px">·</span>three<span class="sp" style="width:12.331px">·</span>months<span class="sp" style="width:12.331px">·</span>in<span class="sp" style="width:12.331px">·</span>the<span class="sp" style="width:12.331px">·</span>Old</div>
<div class="dl" style="left:377.46px;top:63.76px">Country,<span class="sp" style="width:8.658px">·</span>and<span class="sp" style="width:8.658px">·</span>was<span class="sp" style="width:8.658px">·</span>fed<span class="sp" style="width:8.658px">·</span>up<span class="sp" style="width:8.658px">·</span>with<span class="sp" style="width:8.658px">·</span>it.<span class="sp" style="width:8.658px">·</span>If<span class="sp" style="width:8.658px">·</span>anyone<span class="sp" style="width:8.658px">·</span>had<span class="sp" style="width:8.658px">·</span>told<span class="sp" style="width:8.658px">·</span>me<span class="sp" style="width:8.658px">·</span>a<span class="sp" style="width:8.658px">·</span>year<span class="sp" style="width:8.658px">·</span>ago<span class="sp" style="width:8.658px">·</span>that<span class="sp" style="width:8.658px">·</span>I</div>
<div class="dl" style="left:377.46px;top:79.66px">would<span class="sp" style="width:12.298px">·</span>have<span class="sp" style="width:12.298px">·</span>been<span class="sp" style="width:12.298px">·</span>feeling<span class="sp" style="width:12.298px">·</span>like<span class="sp" style="width:12.298px">·</span>that<span class="sp" style="width:12.298px">·</span>I<span class="sp" style="width:12.298px">·</span>should<span class="sp" style="width:12.298px">·</span>have<span class="sp" style="width:12.298px">·</span>laughed<span class="sp" style="width:12.298px">·</span>at<span class="sp" style="width:12.298px">·</span>him;<span class="sp" style="width:12.298px">·</span>but</div>
<div class="dl" style="left:377.46px;top:95.56px">there<span class="sp" style="width:13.719px">·</span>was<span class="sp" style="width:13.719px">·</span>the<span class="sp" style="width:13.719px">·</span>fact.<span class="sp" style="width:13.719px">·</span>The<span class="sp" style="width:13.719px">·</span>weather<span class="sp" style="width:13.719px">·</span>made<span class="sp" style="width:13.719px">·</span>me<span class="sp" style="width:13.719px">·</span>liverish,<span class="sp" style="width:13.719px">·</span>the<span class="sp" style="width:13.719px">·</span>talk<span class="sp" style="width:13.719px">·</span>of<span class="sp" style="width:13.719px">·</span>the</div>
<div class="dl" style="left:377.46px;top:111.46px">ordinary<span class="sp" style="width:11.243px">·</span>Englishman<span class="sp" style="width:11.243px">·</span>made<span class="sp" style="width:11.243px">·</span>me<span class="sp" style="width:11.243px">·</span>sick.<span class="sp" style="width:11.243px">·</span>I<span class="sp" style="width:11.243px">·</span>couldn’t<span class="sp" style="width:11.243px">·</span>get<span class="sp" style="width:11.243px">·</span>enough<span class="sp" style="width:11.243px">·</span>exercise,<span class="sp" style="width:11.243px">·</span>and</div>
<div class="dl" style="left:377.46px;top:127.36px">the<span class="sp" style="width:12.580px">·</span>amusements<span class="sp" style="width:12.580px">·</span>of<span class="sp" style="width:12.580px">·</span>London<span class="sp" style="width:12.580px">·</span>seemed<span class="sp" style="width:12.580px">·</span>as<span class="sp" style="width:12.580px">·</span>flat<span class="sp" style="width:12.580px">·</span>as<span class="sp" style="width:12.580px">·</span>soda-water<span class="sp" style="width:12.580px">·</span>that<span class="sp" style="width:12.580px">·</span>has<span class="sp" style="width:12.580px">·</span>been</div>
<div class="dl" style="left:377.46px;top:143.26px">standing<span class="sp" style="width:9.340px">·</span>in<span class="sp" style="width:9.340px">·</span>the<span class="sp" style="width:9.340px">·</span>sun.<span class="sp" style="width:9.340px">·</span>“Richard<span class="sp" style="width:9.340px">·</span>Hannay,”<span class="sp" style="width:9.340px">·</span>I<span class="sp" style="width:9.340px">·</span>kept<span class="sp" style="width:9.340px">·</span>telling<span class="sp" style="width:9.340px">·</span>myself,<span class="sp" style="width:9.340px">·</span>“you<span class="sp" style="width:9.340px">·</span>have</div>
<div class="dl" style="left:377.46px;top:159.16px">got<span class="sp" style="width:8.670px">·</span>into<span class="sp" style="width:8.670px">·</span>the<span class="sp" style="width:8.670px">·</span>wrong<span class="sp" style="width:8.670px">·</span>ditch,<span class="sp" style="width:8.670px">·</span>my<span class="sp" style="width:8.670px">·</span>friend,<span class="sp" style="width:8.670px">·</span>and<span class="sp" style="width:8.670px">·</span>you<span class="sp" style="width:8.670px">·</span>had<span class="sp" style="width:8.670px">·</span>better<span class="sp" style="width:8.670px">·</span>climb<span class="sp" style="width:8.670px">·</span>out.”¶</div>
<div class="dl" style="left:393.36px;top:179.96px">It<span class="sp" style="width:9.852px">·</span>made<span class="sp" style="width:9.852px">·</span>me<span class="sp" style="width:9.852px">·</span>bite<span class="sp" style="width:9.852px">·</span>my<span class="sp" style="width:9.852px">·</span>lips<span class="sp" style="width:9.852px">·</span>to<span class="sp" style="width:9.852px">·</span>think<span class="sp" style="width:9.852px">·</span>of<span class="sp" style="width:9.852px">·</span>the<span class="sp" style="width:9.852px">·</span>plans<span class="sp" style="width:9.852px">·</span>I<span class="sp" style="width:9.852px">·</span>had<span class="sp" style="width:9.852px">·</span>been<span class="sp" style="width:9.852px">·</span>building<span class="sp" style="width:9.852px">·</span>up</div>
<div class="dl" style="left:377.46px;top:195.86px">those<span class="sp" style="width:8.615px">·</span>last<span class="sp" style="width:8.615px">·</span>years<span class="sp" style="width:8.615px">·</span>in<span class="sp" style="width:8.615px">·</span>Buluwayo.<span class="sp" style="width:8.615px">·</span>I<span class="sp" style="width:8.615px">·</span>had<span class="sp" style="width:8.615px">·</span>got<span class="sp" style="width:8.615px">·</span>my<span class="sp" style="width:8.615px">·</span>pile—not<span class="sp" style="width:8.615px">·</span>one<span class="sp" style="width:8.615px">·</span>of<span class="sp" style="width:8.615px">·</span>the<span class="sp" style="width:8.615px">·</span>big<span class="sp" style="width:8.615px">·</span>ones,</div>
<div class="dl" style="left:377.46px;top:211.76px">but<span class="sp" style="width:12.343px">·</span>good<span class="sp" style="width:12.343px">·</span>enough<span class="sp" style="width:12.343px">·</span>for<span class="sp" style="width:12.343px">·</span>me;<span class="sp" style="width:12.343px">·</span>and<span class="sp" style="width:12.343px">·</span>I<span class="sp" style="width:12.343px">·</span>had<span class="sp" style="width:12.343px">·</span>figured<span class="sp" style="width:12.343px">·</span>out<span class="sp" style="width:12.343px">·</span>all<span class="sp" style="width:12.343px">·</span>kinds<span class="sp" style="width:12.343px">·</span>of<span class="sp" style="width:12.343px">·</span>ways<span class="sp" style="width:12.343px">·</span>of</div>
<div class="dl" style="left:377.46px;top:227.66px">enjoying<span class="sp" style="width:10.146px">·</span>myself.<span class="sp" style="width:10.146px">·</span>My<span class="sp" style="width:10.146px">·</span>father<span class="sp" style="width:10.146px">·</span>had<span class="sp" style="width:10.146px">·</span>brought<span class="sp" style="width:10.146px">·</span>me<span class="sp" style="width:10.146px">·</span>out<span class="sp" style="width:10.146px">·</span>from<span class="sp" style="width:10.146px">·</span>Scotland<span class="sp" style="width:10.146px">·</span>at<span class="sp" style="width:10.146px">·</span>the<span class="sp" style="width:10.146px">·</span>age</div>
<div class="dl" style="left:377.46px;top:243.56px">of<span class="sp" style="width:13.108px">·</span>six,<span class="sp" style="width:13.108px">·</span>and<span class="sp" style="width:13.108px">·</span>I<span class="sp" style="width:13.108px">·</span>had<span class="sp" style="width:13.108px">·</span>never<span class="sp" style="width:13.108px">·</span>been<span class="sp" style="width:13.108px">·</span>home<span class="sp" style="width:13.108px">·</span>since;<span class="sp" style="width:13.108px">·</span>so<span class="sp" style="width:13.108px">·</span>England<span class="sp" style="width:13.108px">·</span>was<span class="sp" style="width:13.108px">·</span>a<span class="sp" style="width:13.108px">·</span>sort<span class="sp" style="width:13.108px">·</span>of</div>
<div class="dl" style="left:377.46px;top:259.46px">Arabian<span class="sp" style="width:8.598px">·</span>Nights<span class="sp" style="width:8.598px">·</span>to<span class="sp" style="width:8.598px">·</span>me,<span class="sp" style="width:8.598px">·</span>and<span class="sp" style="width:8.598px">·</span>I<span class="sp" style="width:8.598px">·</span>counted<span class="sp" style="width:8.598px">·</span>on<span class="sp" style="width:8.598px">·</span>stopping<span class="sp" style="width:8.598px">·</span>there<span class="sp" style="width:8.598px">·</span>for<span class="sp" style="width:8.598px">·</span>the<span class="sp" style="width:8.598px">·</span>rest<span class="sp" style="width:8.598px">·</span>of<span class="sp" style="width:8.598px">·</span>my</div>
<div class="dl" style="left:377.46px;top:275.36px">days.¶</div>
<div class="dl" style="left:393.36px;top:296.26px">But<span class="sp" style="width:9.923px">·</span>from<span class="sp" style="width:9.923px">·</span>the<span class="sp" style="width:9.923px">·</span>first<span class="sp" style="width:9.923px">·</span>I<span class="sp" style="width:9.923px">·</span>was<span class="sp" style="width:9.923px">·</span>disappointed<span class="sp" style="width:9.923px">·</span>with<span class="sp" style="width:9.923px">·</span>it.<span class="sp" style="width:9.923px">·</span>In<span class="sp" style="width:9.923px">·</span>about<span class="sp" style="width:9.923px">·</span>a<span class="sp" style="width:9.923px">·</span>week<span class="sp" style="width:9.923px">·</span>I<span class="sp" style="width:9.923px">·</span>was</div>
<div class="dl" style="left:377.46px;top:312.16px">tired<span class="sp" style="width:11.099px">·</span>of<span class="sp" style="width:11.099px">·</span>seeing<span class="sp" style="width:11.099px">·</span>sights,<span class="sp" style="width:11.099px">·</span>and<span class="sp" style="width:11.099px">·</span>in<span class="sp" style="width:11.099px">·</span>less<span class="sp" style="width:11.099px">·</span>than<span class="sp" style="width:11.099px">·</span>a<span class="sp" style="width:11.099px">·</span>month<span class="sp" style="width:11.099px">·</span>I<span class="sp" style="width:11.099px">·</span>had<span class="sp" style="width:11.099px">·</span>had<span class="sp" style="width:11.099px">·</span>enough<span class="sp" style="width:11.099px">·</span>of</div>
<div class="dl" style="left:377.46px;top:328.06px">restaurants<span class="sp" style="width:12.519px">·</span>and<span class="sp" style="width:12.519px">·</span>theatres<span class="sp" style="width:12.519px">·</span>and<span class="sp" style="width:12.519px">·</span>race-meetings.<span class="sp" style="width:12.519px">·</span>I<span class="sp" style="width:12.519px">·</span>had<span class="sp" style="width:12.519px">·</span>no<span class="sp" style="width:12.519px">·</span>real<span class="sp" style="width:12.519px">·</span>pal<span class="sp" style="width:12.519px">·</span>to<span class="sp" style="width:12.519px">·</span>go</div>
<div class="dl" style="left:377.46px;top:343.96px">about<span class="sp" style="width:9.365px">·</span>with,<span class="sp" style="width:9.365px">·</span>which<span class="sp" style="width:9.365px">·</span>probably<span class="sp" style="width:9.365px">·</span>explains<span class="sp" style="width:9.365px">·</span>things.<span class="sp" style="width:9.365px">·</span>Plenty<span class="sp" style="width:9.365px">·</span>of<span class="sp" style="width:9.365px">·</span>people<span class="sp" style="width:9.365px">·</span>invited<span class="sp" style="width:9.365px">·</span>me</div>
<div class="dl" style="left:377.46px;top:359.86px">to<span class="sp" style="width:8.670px">·</span>their<span class="sp" style="width:8.670px">·</span>houses,<span class="sp" style="width:8.670px">·</span>but<span class="sp" style="width:8.670px">·</span>they<span class="sp" style="width:8.670px">·</span>didn’t<span class="sp" style="width:8.670px">·</span>seem<span class="sp" style="width:8.670px">·</span>much<span class="sp" style="width:8.670px">·</span>interested<span class="sp" style="width:8.670px">·</span>in<span class="sp" style="width:8.670px">·</span>me.<span class="sp" style="width:8.670px">·</span>They<span class="sp" style="width:8.670px">·</span>would</div>
<div class="a" style="left:376.6px;top:53.2px;width:99.5px;height:1.6px;background:repeating-linear-gradient(90deg,#c98a3a 0 2px,transparent 2px 3.2px)"></div>
<div class="a" style="left:376.6px;top:68px;width:104px;height:1.2px;background:#8db0ea;"></div>
<div class="a" style="left:376.6px;top:70.5px;width:104px;height:1.2px;background:#8db0ea;"></div>
<div class="a" style="left:772.9px;top:248.2px;width:17.1px;height:1.2px;background:#8db0ea;"></div>
<div class="a" style="left:772.9px;top:250.7px;width:17.1px;height:1.2px;background:#8db0ea;"></div>
<svg class="a" style="left:641.1px;top:148px;overflow:hidden" width="52.3" height="5" viewBox="0 0 52.3 5"><path d="M0 2.5 Q1 0.5 2 2.5 Q3 4.5 4 2.5 Q5 0.5 6 2.5 Q7 4.5 8 2.5 Q9 0.5 10 2.5 Q11 4.5 12 2.5 Q13 0.5 14 2.5 Q15 4.5 16 2.5 Q17 0.5 18 2.5 Q19 4.5 20 2.5 Q21 0.5 22 2.5 Q23 4.5 24 2.5 Q25 0.5 26 2.5 Q27 4.5 28 2.5 Q29 0.5 30 2.5 Q31 4.5 32 2.5 Q33 0.5 34 2.5 Q35 4.5 36 2.5 Q37 0.5 38 2.5 Q39 4.5 40 2.5 Q41 0.5 42 2.5 Q43 4.5 44 2.5 Q45 0.5 46 2.5 Q47 4.5 48 2.5 Q49 0.5 50 2.5 Q51 4.5 52 2.5" fill="none" stroke="#e83030" stroke-width="1.1"/></svg>
<svg class="a" style="left:550.2px;top:200.2px;overflow:hidden" width="69.8" height="5" viewBox="0 0 69.8 5"><path d="M0 2.5 Q1 0.5 2 2.5 Q3 4.5 4 2.5 Q5 0.5 6 2.5 Q7 4.5 8 2.5 Q9 0.5 10 2.5 Q11 4.5 12 2.5 Q13 0.5 14 2.5 Q15 4.5 16 2.5 Q17 0.5 18 2.5 Q19 4.5 20 2.5 Q21 0.5 22 2.5 Q23 4.5 24 2.5 Q25 0.5 26 2.5 Q27 4.5 28 2.5 Q29 0.5 30 2.5 Q31 4.5 32 2.5 Q33 0.5 34 2.5 Q35 4.5 36 2.5 Q37 0.5 38 2.5 Q39 4.5 40 2.5 Q41 0.5 42 2.5 Q43 4.5 44 2.5 Q45 0.5 46 2.5 Q47 4.5 48 2.5 Q49 0.5 50 2.5 Q51 4.5 52 2.5 Q53 0.5 54 2.5 Q55 4.5 56 2.5 Q57 0.5 58 2.5 Q59 4.5 60 2.5 Q61 0.5 62 2.5 Q63 4.5 64 2.5 Q65 0.5 66 2.5 Q67 4.5 68 2.5" fill="none" stroke="#e83030" stroke-width="1.1"/></svg>
</div>
<div class="a" style="left:350px;top:535px;width:580px;height:24px;background:#fafafa;"></div>
<div class="t" style="left:355.20px;top:547.84px;font-size:12px;color:#6e655c;letter-spacing:-0.007px">Footnotes</div>
<div class="a" style="left:386.5px;top:553.2px;width:6.5px;height:1px;background:#6e655c;"></div>
<div class="a" style="left:410.5px;top:536.2px;width:364px;height:21px;background:#fff;border:1px solid #c8c8c8"></div>
<div class="t" style="left:413.20px;top:547.50px;font-size:13px;color:#262626;letter-spacing:-0.436px">All Footnotes</div>
<svg class="a" style="left:764.5px;top:545px;" width="8" height="5" viewBox="0 0 8 5"><path d="M0 0 H7 L3.5 3.5Z" fill="#555"/></svg>
<svg class="a" style="left:911px;top:542px;" width="9.5" height="9.5" viewBox="0 0 9.5 9.5"><path d="M1 1 L8.5 8.5 M8.5 1 L1 8.5" stroke="#444" stroke-width="1.5"/></svg>
<div class="a" style="left:350px;top:559px;width:562px;height:82.5px;background:#fff;"></div>
<div class="a" style="left:912px;top:559px;width:18px;height:82.5px;background:#dcdcdc;"></div>
<div class="a" style="left:913.5px;top:560px;width:15px;height:15.5px;background:#fff;"></div>
<svg class="a" style="left:916px;top:565px;" width="9" height="6" viewBox="0 0 9 6"><path d="M0.5 5 L4.5 0.8 L8.5 5Z" fill="#777"/></svg>
<div class="a" style="left:913.5px;top:577px;width:15px;height:16.4px;background:#fff;"></div>
<div class="a" style="left:913.5px;top:625px;width:15px;height:15.5px;background:#fff;"></div>
<svg class="a" style="left:916px;top:630px;" width="9" height="6" viewBox="0 0 9 6"><path d="M0.5 0.5 H8.5 L4.5 4.7Z" fill="#777"/></svg>
<div class="a" style="left:376.2px;top:564px;width:5.8px;height:13px;background:#e0e0e0;border:1px solid #bdbdbd"></div>
<div class="t" style="left:377.40px;top:568.42px;font-size:6px;color:#222">1</div>
<div class="t" style="left:382.00px;top:570.79px;font-size:13.6px;color:#1a1a1a;letter-spacing:-0.508px">·This·is·a·footnote¶</div>
<div class="a" style="left:376.5px;top:582.2px;width:17.3px;height:1.3px;background:#222;"></div>
<div class="a" style="left:350px;top:641.5px;width:562px;height:17px;background:#dcdcdc;"></div>
<div class="a" style="left:351px;top:642px;width:16px;height:16px;background:#fff;"></div>
<svg class="a" style="left:356px;top:646px;" width="6" height="9" viewBox="0 0 6 9"><path d="M5 0.5 V8.5 L0.8 4.5Z" fill="#555"/></svg>
<div class="a" style="left:367.5px;top:642px;width:17px;height:16px;background:#fff;"></div>
<div class="a" style="left:895.6px;top:642px;width:15.6px;height:16px;background:#fff;"></div>
<svg class="a" style="left:901px;top:646px;" width="6" height="9" viewBox="0 0 6 9"><path d="M0.8 0.5 V8.5 L5 4.5Z" fill="#555"/></svg>
<div class="a" style="left:912px;top:641.5px;width:18px;height:17px;background:#fff;"></div>
</body></html>
